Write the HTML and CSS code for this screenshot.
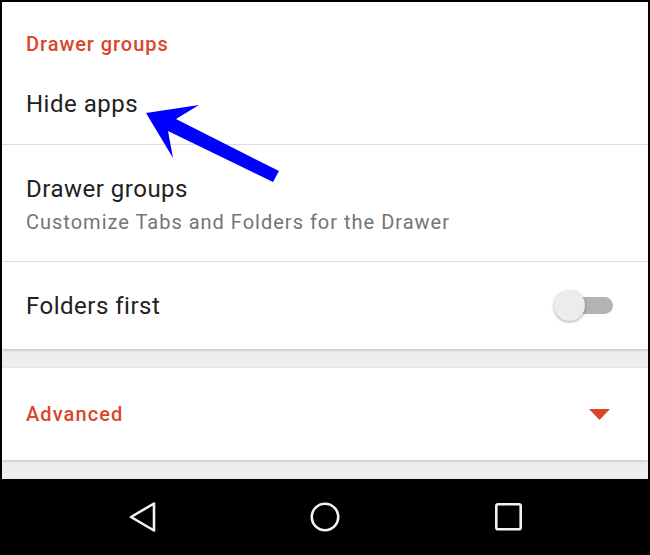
FILE: index.html
```html
<!DOCTYPE html>
<html>

<head>
    <title>Drawer settings</title>
    <link rel="stylesheet" href="styles.css">
</head>

<body>
    <div class="screen">
        <div class="card">
            <div class="category">Drawer groups</div>
            <div class="pref single">
                <span class="title">Hide apps</span>
            </div>
            <div class="divider"></div>
            <div class="pref double">
                <div class="title">Drawer groups</div>
                <div class="summary">Customize Tabs and Folders for the Drawer</div>
            </div>
            <div class="divider"></div>
            <div class="pref single toggle">
                <span class="title">Folders first</span>
                <span class="switch">
                    <span class="track"></span>
                    <span class="thumb"></span>
                </span>
            </div>
        </div>

        <div class="spacer"></div>

        <div class="card">
            <div class="pref expander">
                <span class="category-inline">Advanced</span>
                <svg class="caret" width="21" height="11" viewBox="0 0 21 11">
                    <polygon points="0,0 21,0 10.5,11" fill="#d9462a"/>
                </svg>
            </div>
        </div>

        <div class="spacer"></div>

        <div class="navbar">
            <div class="navslot">
                <svg width="30" height="30" viewBox="0 0 30 30">
                    <polygon points="27,1.5 4,15 27,28.5" fill="none" stroke="#f2f2f2" stroke-width="2.6" stroke-linejoin="round"/>
                </svg>
            </div>
            <div class="navslot">
                <svg width="30" height="30" viewBox="0 0 30 30">
                    <circle cx="15" cy="15" r="13.2" fill="none" stroke="#f2f2f2" stroke-width="2.6"/>
                </svg>
            </div>
            <div class="navslot">
                <svg width="30" height="30" viewBox="0 0 30 30">
                    <rect x="3.3" y="2.3" width="24.4" height="25" rx="1.8" fill="none" stroke="#f2f2f2" stroke-width="2.6"/>
                </svg>
            </div>
        </div>

        <!-- callout arrow drawn over the list -->
        <svg class="callout" width="650" height="200" viewBox="0 0 650 200">
            <polygon points="146,113 199,105 176,119 279,171 273,182 168,131 173,158" fill="#0000ff"/>
        </svg>
    </div>
</body>
</html>
```

FILE: styles.css
```css
html, body {
    margin: 0;
    padding: 0;
}

body {
    font-family: Roboto, "Noto Sans", sans-serif;
    background-color: #000;
}

.screen {
    position: relative;
    width: 646px;
    height: 553px;
    border: 2px solid #000;
    border-bottom: 0px;
    background-color: #eeeeee;
    display: flex;
    flex-direction: column;
}

.card {
    background-color: #fff;
    box-shadow: 0 1px 3px rgba(0, 0, 0, 0.22);
    position: relative;
    z-index: 1;
}

.category {
    height: 62px;
    box-sizing: border-box;
    padding: 30px 0 0 24px;
    font-size: 20px;
    line-height: 24px;
    font-weight: 500;
    letter-spacing: 0.95px;
    color: #d9462a;
}

.pref {
    display: flex;
    align-items: center;
    padding-left: 24px;
    box-sizing: border-box;
}

.single {
    height: 80px;
    font-size: 24px;
    letter-spacing: 0.5px;
    color: #212121;
}

.toggle {
    height: 87px;
    justify-content: space-between;
    padding-right: 35px;
}

.double {
    height: 116px;
    flex-direction: column;
    align-items: flex-start;
    padding-top: 30px;
}

.double .title {
    font-size: 24px;
    line-height: 28px;
    letter-spacing: 0.5px;
    color: #212121;
}

.double .summary {
    margin-top: 7px;
    font-size: 20px;
    line-height: 24px;
    letter-spacing: 1px;
    color: #757575;
}

.divider {
    height: 1px;
    background-color: #dcdcdc;
}

.switch {
    position: relative;
    width: 59px;
    height: 31px;
}

.track {
    position: absolute;
    right: 0px;
    top: 7px;
    width: 52px;
    height: 17px;
    border-radius: 9px;
    background-color: #b3b3b3;
}

.thumb {
    position: absolute;
    left: 0px;
    top: 0px;
    width: 31px;
    height: 31px;
    border-radius: 50%;
    background-color: #ececec;
    box-shadow: 0 1px 3px rgba(0, 0, 0, 0.35);
}

.spacer {
    height: 19px;
}

.expander {
    height: 92px;
    justify-content: space-between;
    padding-right: 38px;
}

.category-inline {
    font-size: 20px;
    font-weight: 500;
    letter-spacing: 1.1px;
    color: #d9462a;
}

.caret {
    display: block;
}

.navbar {
    flex: 1;
    background-color: #000;
    display: flex;
    justify-content: center;
    align-items: center;
    margin: 0 -2px;
}

.navslot {
    width: 183px;
    display: flex;
    justify-content: center;
}

.navslot svg {
    display: block;
}

.callout {
    position: absolute;
    left: -2px;
    top: -2px;
    z-index: 2;
}
```
